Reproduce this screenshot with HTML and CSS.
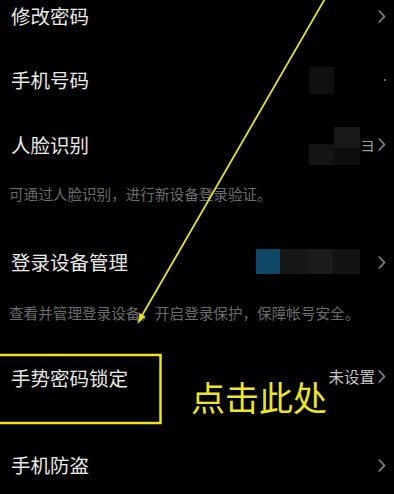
FILE: index.html
```html
<!DOCTYPE html>
<html lang="zh-CN">
<head>
<meta charset="utf-8">
<title>账号与安全</title>
<link rel="stylesheet" href="styles.css">
</head>
<body>
<div class="page">
  <div class="list">
    <div class="row">
      <span class="title">修改密码</span>
      <span class="right"><svg class="chev" viewBox="0 0 8 13"><polyline points="1.2,1 6.5,6.5 1.2,12"/></svg></span>
    </div>
    <div class="row">
      <span class="title">手机号码</span>
      <span class="right">
        <span class="mosaic m-phone"></span>
        <span class="dot"></span>
      </span>
    </div>
    <div class="row row-tall">
      <span class="title">人脸识别</span>
      <span class="right">
        <span class="mosaic-group">
          <span class="mosaic m-face1"></span>
          <span class="mosaic m-face2"></span>
        </span>
        <span class="frag">ヨ</span>
        <svg class="chev" viewBox="0 0 8 13"><polyline points="1.2,1 6.5,6.5 1.2,12"/></svg>
      </span>
    </div>
    <p class="desc desc-face">可通过人脸识别，进行新设备登录验证。</p>
    <div class="row">
      <span class="title">登录设备管理</span>
      <span class="right">
        <span class="devices">
          <span class="dev dev-blue"></span>
          <span class="dev dev-a"></span>
          <span class="dev dev-b"></span>
          <span class="dev dev-c"></span>
        </span>
        <svg class="chev" viewBox="0 0 8 13"><polyline points="1.2,1 6.5,6.5 1.2,12"/></svg>
      </span>
    </div>
    <p class="desc desc-device">查看并管理登录设备，开启登录保护，保障帐号安全。</p>
    <div class="row row-gesture">
      <span class="title">手势密码锁定</span>
      <span class="right">
        <span class="value">未设置</span>
        <svg class="chev" viewBox="0 0 8 13"><polyline points="1.2,1 6.5,6.5 1.2,12"/></svg>
      </span>
    </div>
    <div class="row row-last">
      <span class="title">手机防盗</span>
      <span class="right"><svg class="chev" viewBox="0 0 8 13"><polyline points="1.2,1 6.5,6.5 1.2,12"/></svg></span>
    </div>
  </div>

  <svg class="annot" viewBox="0 0 394 494" width="394" height="494">
    <line x1="326" y1="-3" x2="140" y2="319" class="a-line"/>
    <polygon points="137.5,324 145.5,316.5 139.5,313" class="a-head"/>
    <rect x="-5" y="355" width="165.5" height="68" class="a-box"/>
  </svg>
  <span class="callout">点击此处</span>
</div>
</body>
</html>
```

FILE: styles.css
```css
html, body {
  margin: 0;
  padding: 0;
  background: #000;
}

body {
  font-family: "Noto Sans CJK SC", "Noto Sans", sans-serif;
  color: #e6e6e6;
  width: 394px;
  height: 494px;
  overflow: hidden;
}

.page {
  position: relative;
  width: 394px;
  height: 494px;
  overflow: hidden;
}

.list {
  display: flex;
  flex-direction: column;
  margin-top: -16px;
}

.row {
  display: flex;
  align-items: center;
  justify-content: space-between;
  height: 64px;
  padding: 0 8px 0 11px;
}

.row-tall {
  height: 65px;
}

.row-gesture {
  height: 64px;
  align-items: flex-start;
  padding-top: 20px;
  box-sizing: border-box;
}

.row-last {
  margin-top: 23px;
}

.title {
  font-size: 19.5px;
  line-height: 24px;
  color: #e8e8e8;
}

.right {
  display: flex;
  align-items: center;
}

.chev {
  width: 8px;
  height: 13px;
  fill: none;
  stroke: #8c8c8c;
  stroke-width: 1.6;
  stroke-linecap: round;
  stroke-linejoin: round;
}

.mosaic {
  display: block;
  background: #101010;
}

.m-phone {
  width: 25px;
  height: 27px;
  margin-right: 50px;
}

.dot {
  display: block;
  width: 2px;
  height: 2px;
  border-radius: 1px;
  background: #8a8a8a;
}

.mosaic-group {
  display: flex;
  align-items: flex-end;
  margin-top: 3px;
}

.m-face1 {
  width: 25px;
  height: 21px;
  background: #141414;
}

.m-face2 {
  width: 26px;
  height: 38px;
  background: linear-gradient(#181818 0 55%, #0d0d0d 55% 100%);
}

.frag {
  display: block;
  width: 14px;
  text-align: center;
  font-size: 15px;
  line-height: 18px;
  color: #9a9a9a;
  margin-right: 4px;
}

.devices {
  display: flex;
  margin-right: 18px;
  margin-top: -2px;
}

.dev {
  display: block;
  height: 25px;
}

.dev-blue {
  width: 24px;
  background: #0f4866;
}

.dev-a {
  width: 27px;
  background: #171717;
}

.dev-b {
  width: 26px;
  background: #1b1b1b;
}

.dev-c {
  width: 27px;
  background: #131313;
}

.desc {
  margin: 0;
  padding: 0 0 0 9px;
  font-size: 14.6px;
  line-height: 20px;
  color: #6c6c6c;
  white-space: nowrap;
}

.desc-face {
  height: 53px;
  padding-top: 7px;
  box-sizing: border-box;
}

.desc-device {
  height: 52px;
  padding-top: 9px;
  box-sizing: border-box;
}

.value {
  font-size: 15.5px;
  line-height: 20px;
  color: #c4c4c4;
  margin-right: 3px;
}

.annot {
  position: absolute;
  left: 0;
  top: 0;
  pointer-events: none;
}

.a-line {
  stroke: #e4e02a;
  stroke-width: 1.8;
}

.a-head {
  fill: #e4e02a;
}

.a-box {
  fill: none;
  stroke: #efe32a;
  stroke-width: 2.5;
}

.callout {
  position: absolute;
  left: 191px;
  top: 378px;
  font-size: 34px;
  line-height: 38px;
  color: #ece52b;
  white-space: nowrap;
}
```
